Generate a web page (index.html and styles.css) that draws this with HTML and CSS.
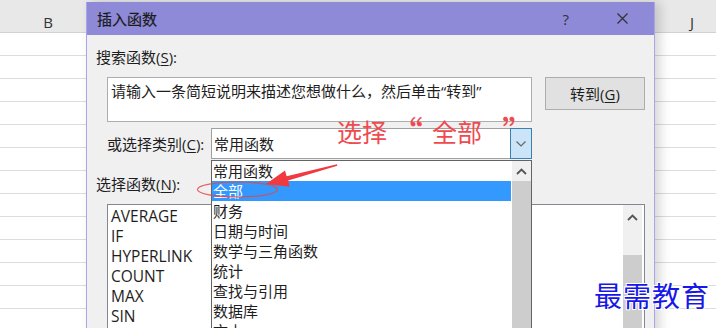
FILE: index.html
```html
<html lang="zh-CN">
    <head>
        <meta charset="utf-8" />
        <link rel="stylesheet" href="styles.css">
    </head>
    <body>
        <div class="sheet">
            <div class="sheet-head">
                <span class="col-b">B</span>
                <span class="col-j">J</span>
            </div>
            <div class="sheet-row"></div>
            <div class="sheet-row"></div>
            <div class="sheet-row"></div>
            <div class="sheet-row"></div>
            <div class="sheet-row"></div>
            <div class="sheet-row"></div>
            <div class="sheet-row"></div>
            <div class="sheet-row"></div>
            <div class="sheet-row"></div>
            <div class="sheet-row"></div>
            <div class="sheet-row"></div>
            <div class="sheet-row"></div>
            <div class="sheet-row"></div>
        </div>

        <div class="dialog">
            <div class="titlebar">
                <span class="title">插入函数</span>
                <span class="help">?</span>
                <svg class="close" width="11" height="11" viewBox="0 0 11 11">
                    <path d="M0.5 0.5 L10.5 10.5 M10.5 0.5 L0.5 10.5" stroke="#333" stroke-width="1.3" fill="none"/>
                </svg>
            </div>

            <div class="dialog-body">
                <div class="label">搜索函数(<u>S</u>):</div>
                <div class="search-row">
                    <div class="search-box">请输入一条简短说明来描述您想做什么，然后单击“转到”</div>
                    <div class="btn">转到(<u>G</u>)</div>
                </div>

                <div class="category-row">
                    <div class="label cat-label">或选择类别(<u>C</u>):</div>
                    <div class="select">
                        <span class="select-text">常用函数</span>
                        <span class="select-btn">
                            <svg width="10" height="6" viewBox="0 0 10 6">
                                <path d="M0.5 0.5 L5 5 L9.5 0.5" stroke="#666" stroke-width="1.2" fill="none"/>
                            </svg>
                        </span>
                    </div>
                </div>

                <div class="label func-label">选择函数(<u>N</u>):</div>
                <div class="func-list">
                    <div class="func-items">
                        <div class="func">AVERAGE</div>
                        <div class="func">IF</div>
                        <div class="func">HYPERLINK</div>
                        <div class="func">COUNT</div>
                        <div class="func">MAX</div>
                        <div class="func">SIN</div>
                    </div>
                    <div class="scroll">
                        <div class="scroll-up">
                            <svg width="11" height="7" viewBox="0 0 11 7">
                                <path d="M1 6 L5.5 1.5 L10 6" stroke="#555" stroke-width="1.8" fill="none"/>
                            </svg>
                        </div>
                        <div class="func-thumb"></div>
                    </div>
                </div>
            </div>

            <div class="dropdown">
                <div class="dd-items">
                    <div class="dd-item">常用函数</div>
                    <div class="dd-item selected">全部</div>
                    <div class="dd-item">财务</div>
                    <div class="dd-item">日期与时间</div>
                    <div class="dd-item">数学与三角函数</div>
                    <div class="dd-item">统计</div>
                    <div class="dd-item">查找与引用</div>
                    <div class="dd-item">数据库</div>
                    <div class="dd-item">文本</div>
                </div>
                <div class="dd-scroll">
                    <div class="dd-up">
                        <svg width="11" height="7" viewBox="0 0 11 7">
                            <path d="M1 6 L5.5 1.5 L10 6" stroke="#555" stroke-width="1.8" fill="none"/>
                        </svg>
                    </div>
                    <div class="dd-thumb"></div>
                </div>
            </div>
        </div>

        <div class="note">选择<span class="q q-open">“</span>全部<span class="q q-close">”</span></div>

        <svg class="marks" width="716" height="328" viewBox="0 0 716 328">
            <ellipse cx="237.5" cy="189.5" rx="40" ry="7.5" fill="none" stroke="#e0474c" stroke-width="1.2" opacity="0.85"/>
            <polygon points="266,184 285,170.4 286.6,176.2 337,164.2 337.3,165.7 288.2,180.6 289.6,186.8" fill="#f03a3f"/>
        </svg>

        <div class="watermark">最需教育</div>
    </body>
</html>
```

FILE: styles.css
```css
body {
    margin: 0;
    width: 716px;
    height: 328px;
    overflow: hidden;
    position: relative;
    background-color: white;
    font-family: "Open Sans", "Noto Sans CJK SC", sans-serif;
    font-size: 15px;
    color: #1e1e1e;
}

.sheet-head {
    display: flex;
    height: 33px;
    box-sizing: border-box;
    padding-top: 12px;
    line-height: 20px;
    background-color: #e8e8e8;
    border-bottom: solid 1px #d2d2d2;
    color: #333;
    font-size: 15px;
}

.col-b {
    width: 96px;
    text-align: center;
}

.col-j {
    width: 48px;
    margin-left: auto;
    text-align: center;
}

.sheet-row {
    height: 22px;
    border-bottom: solid 1px #dcdcdc;
}

.dialog {
    position: absolute;
    left: 86px;
    top: 2px;
    width: 569px;
    height: 340px;
    box-sizing: border-box;
    border-left: solid 1px #a9a5e6;
    border-right: solid 1px #a9a5e6;
    background-color: #f0f0f0;
    box-shadow: 5px 0 10px rgba(0, 0, 0, 0.16);
    overflow: hidden;
}

.titlebar {
    display: flex;
    align-items: center;
    height: 33px;
    padding: 0 26px 0 10px;
    background-color: #8e8ad8;
}

.title {
    color: #1a1a1a;
    -webkit-text-stroke: 0.2px #1a1a1a;
}

.help {
    margin-left: auto;
    margin-right: 48px;
    color: #333;
}

.dialog-body {
    padding: 12px 0 0 9px;
}

.label {
    line-height: 20px;
}

u {
    text-underline-offset: 2px;
}

.search-row {
    display: flex;
    margin: 10px 0 0 11px;
}

.search-box {
    width: 425px;
    height: 45px;
    box-sizing: border-box;
    padding: 3px 3px;
    line-height: 20px;
    border: solid 1px #abadb3;
    background-color: white;
}

.btn {
    width: 100px;
    height: 33px;
    box-sizing: border-box;
    margin-left: 13px;
    border: solid 1px #adadad;
    background-color: #e1e1e1;
    display: flex;
    align-items: center;
    justify-content: center;
}

.category-row {
    display: flex;
    align-items: center;
    margin: 6px 0 0 11px;
}

.cat-label {
    width: 104px;
}

.select {
    display: flex;
    align-items: center;
    width: 321px;
    height: 31px;
    box-sizing: border-box;
    border: solid 1px #a0a0a0;
    background-color: white;
}

.select-text {
    padding-left: 2px;
    flex: 1;
}

.select-btn {
    align-self: stretch;
    width: 20px;
    margin: -1px -1px -1px 0;
    border: solid 1px #3c7fb1;
    background-color: #cce4f7;
    display: flex;
    align-items: center;
    justify-content: center;
}

.func-label {
    margin-top: 15px;
}

.func-list {
    display: flex;
    width: 538px;
    height: 140px;
    box-sizing: border-box;
    margin: 10px 0 0 11px;
    border: solid 1px #828790;
    background-color: white;
}

.func-items {
    flex: 1;
    padding: 1px 3px;
}

.func {
    line-height: 20px;
    font-size: 15.5px;
}

.scroll {
    width: 19px;
    margin-right: 2px;
    background-color: #f0f0f0;
}

.scroll-up {
    height: 24px;
    display: flex;
    align-items: center;
    justify-content: center;
}

.func-thumb {
    margin-top: 26px;
    height: 100px;
    background-color: #cdcdcd;
}

.dropdown {
    position: absolute;
    left: 124px;
    top: 158px;
    width: 321px;
    height: 190px;
    box-sizing: border-box;
    display: flex;
    border: solid 1px #646464;
    background-color: white;
}

.dd-items {
    width: 299px;
}

.dd-item {
    height: 20px;
    line-height: 20px;
    padding-left: 1px;
}

.selected {
    background-color: #3399ff;
    color: white;
}

.dd-scroll {
    flex: 1;
    margin-left: 1px;
    display: flex;
    flex-direction: column;
    background-color: #f0f0f0;
}

.dd-up {
    height: 20px;
    display: flex;
    align-items: center;
    justify-content: center;
}

.dd-thumb {
    flex: 1;
    background-color: #cdcdcd;
}

.note {
    position: absolute;
    left: 337px;
    top: 116px;
    font-family: "Noto Sans CJK SC", sans-serif;
    font-size: 25px;
    line-height: 30px;
    color: #ef4a4f;
}

.q {
    font-size: 33px;
    line-height: 0;
    position: relative;
    top: 3px;
}

.q-open {
    margin: 0 9px 0 3px;
}

.q-close {
    margin-left: 20px;
}

.marks {
    position: absolute;
    left: 0;
    top: 0;
    pointer-events: none;
}

.watermark {
    position: absolute;
    left: 594px;
    top: 278px;
    font-family: "Noto Sans CJK SC", sans-serif;
    font-size: 28px;
    line-height: 34px;
    letter-spacing: 1px;
    color: #1717e8;
    text-shadow: 1px 1px 0 white, -1px -1px 0 white, 1px -1px 0 white, -1px 1px 0 white;
}
```
